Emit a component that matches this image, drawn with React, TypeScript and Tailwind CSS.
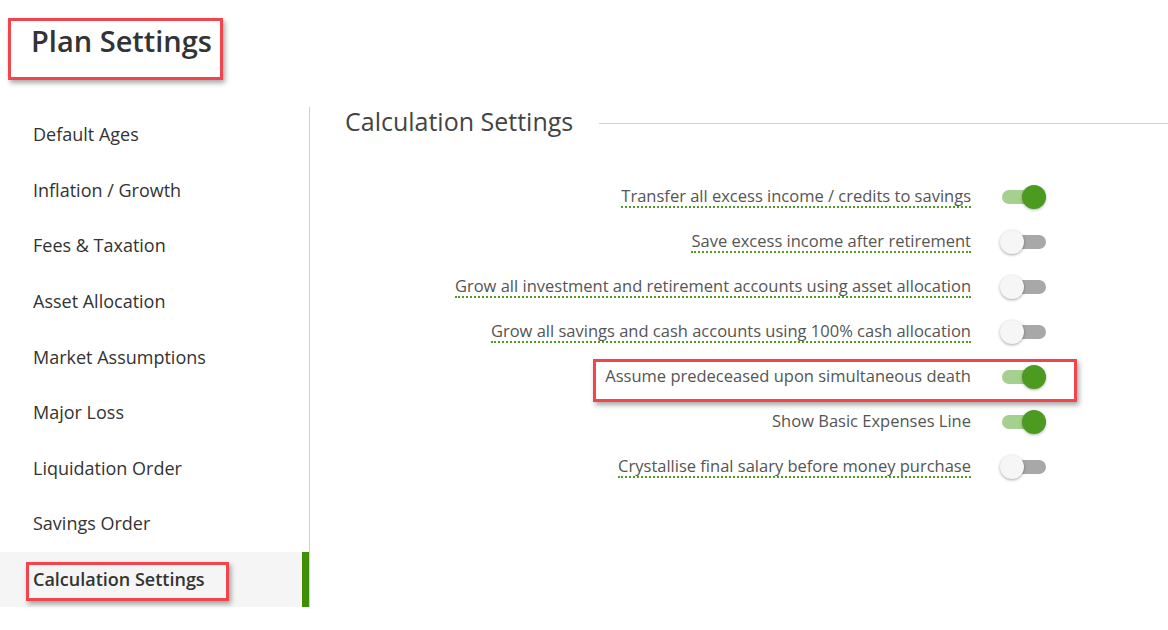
import React from 'react';

const navItems = [
  'Default Ages',
  'Inflation / Growth',
  'Fees & Taxation',
  'Asset Allocation',
  'Market Assumptions',
  'Major Loss',
  'Liquidation Order',
  'Savings Order',
  'Calculation Settings',
];

const settings = [
  { label: 'Transfer all excess income / credits to savings', on: true, hint: true },
  { label: 'Save excess income after retirement', on: false, hint: true },
  { label: 'Grow all investment and retirement accounts using asset allocation', on: false, hint: true },
  { label: 'Grow all savings and cash accounts using 100% cash allocation', on: false, hint: true },
  { label: 'Assume predeceased upon simultaneous death', on: true, hint: false },
  { label: 'Show Basic Expenses Line', on: true, hint: false },
  { label: 'Crystallise final salary before money purchase', on: false, hint: true },
];

function Toggle({ on }: { on: boolean }) {
  return (
    <div className="relative w-[46px] h-6 flex items-center">
      <div
        className={
          on
            ? 'ml-[2px] w-[44px] h-[14px] rounded-full bg-[#a6d08f]'
            : 'ml-[2px] w-[44px] h-[14px] rounded-full bg-[#a8a8a8]'
        }
      />
      <div
        className={
          on
            ? 'absolute right-0 top-0 w-6 h-6 rounded-full bg-[#4c9a1f] shadow-[0_1px_3px_rgba(0,0,0,0.3)]'
            : 'absolute left-0 top-0 w-6 h-6 rounded-full bg-[#f6f6f6] shadow-[0_1px_3px_rgba(0,0,0,0.35)]'
        }
      />
    </div>
  );
}

export default function App() {
  return (
    <div className="relative w-[1168px] h-[630px] bg-white overflow-hidden font-['Open_Sans',sans-serif]">
      <h1 className="pt-[23px] pl-[31px] h-[107px] text-[29px] leading-9 font-semibold text-[#333]">
        Plan Settings
      </h1>

      <div className="flex">
        {/* side nav */}
        <div className="w-[310px] border-r border-[#d0d0d0] shrink-0">
          {navItems.map((item) => {
            const active = item === 'Calculation Settings';
            return (
              <div
                key={item}
                className={
                  active
                    ? 'h-[55.6px] flex items-center pl-[33px] bg-[#f5f5f5] border-r-[7px] border-[#3e8e06] text-[18px] font-semibold text-[#333]'
                    : 'h-[55.6px] flex items-center pl-[33px] text-[18px] text-[#333]'
                }
              >
                {item}
              </div>
            );
          })}
        </div>

        {/* main panel */}
        <div className="flex-1 pl-[35px]">
          <div className="flex items-center -mt-[2px]">
            <h2 className="text-[25px] leading-8 text-[#444]">Calculation Settings</h2>
            <div className="flex-1 ml-[26px] mt-[4px] h-px bg-[#d3d3d3]" />
          </div>

          <div className="mt-[37px] pr-[122px]">
            {settings.map((s) => (
              <div key={s.label} className="h-[45px] flex items-center justify-end">
                <span
                  className={
                    s.hint
                      ? 'text-[16.5px] leading-5 text-[#555] border-b-2 border-dotted border-[#4f9c22]'
                      : 'text-[16.5px] leading-5 text-[#555] border-b-2 border-transparent'
                  }
                >
                  {s.label}
                </span>
                <div className="ml-[29px]">
                  <Toggle on={s.on} />
                </div>
              </div>
            ))}
          </div>
        </div>
      </div>

      {/* annotation boxes */}
      <div className="absolute left-[8px] top-[18px] w-[215px] h-[62px] border-[3px] border-[#f0454a] shadow-[2px_3px_5px_rgba(0,0,0,0.35)]" />
      <div className="absolute left-[26px] top-[562px] w-[203px] h-[39px] border-[3px] border-[#f0454a] shadow-[2px_3px_5px_rgba(0,0,0,0.35)]" />
      <div className="absolute left-[593px] top-[359px] w-[484px] h-[43px] border-[3px] border-[#f0454a] shadow-[2px_3px_5px_rgba(0,0,0,0.35)]" />
    </div>
  );
}
